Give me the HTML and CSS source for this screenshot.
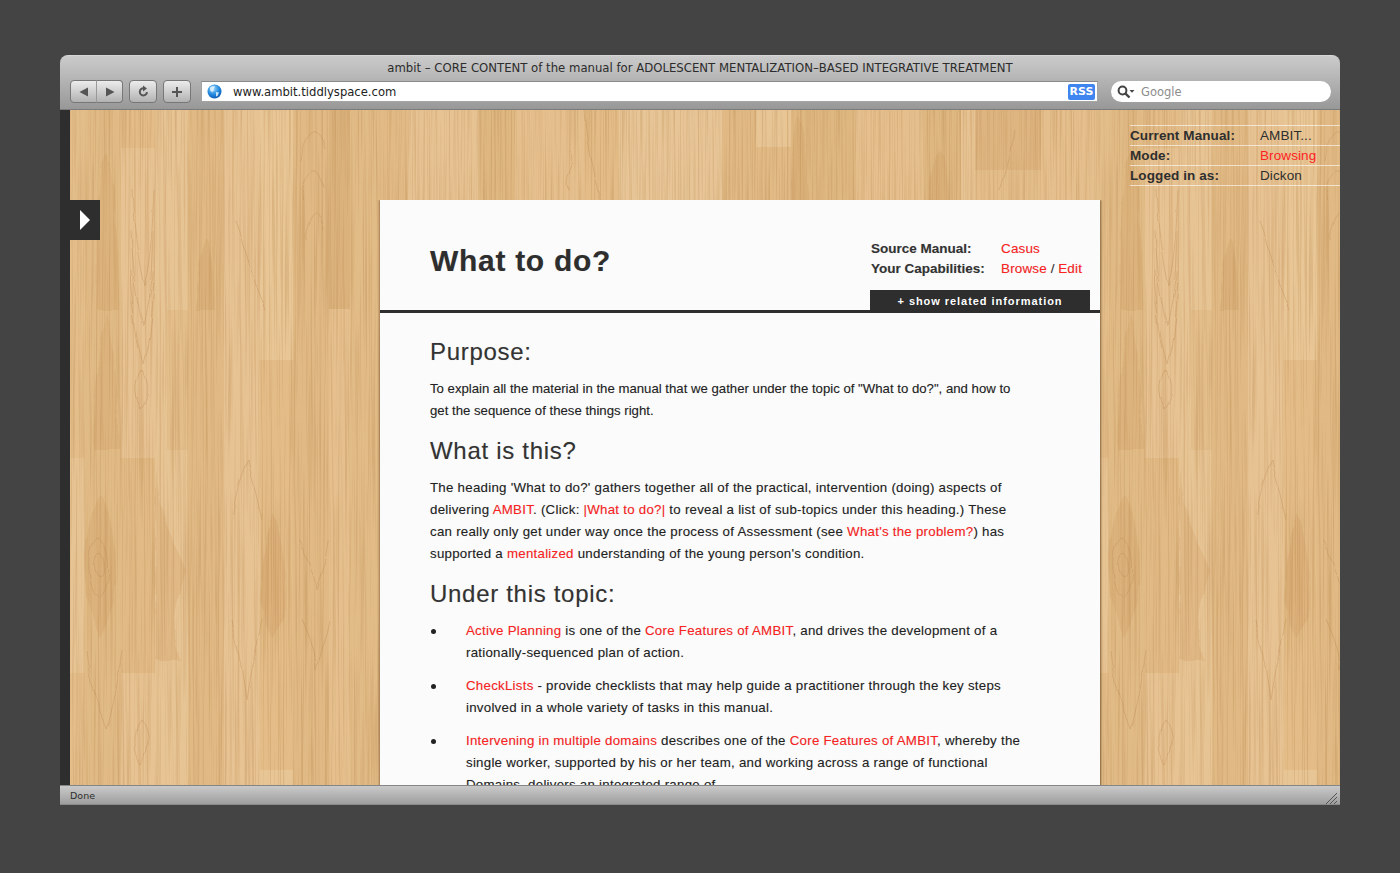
FILE: index.html
```html
<!DOCTYPE html>
<html lang="en">
<head>
    <meta charset="UTF-8">
    <title>ambit - CORE CONTENT of the manual for ADOLESCENT MENTALIZATION-BASED INTEGRATIVE TREATMENT</title>
    <link rel="stylesheet" href="styles.css">
</head>
<body>
    <div class="window">
        <div class="chrome">
            <div class="window-title">ambit &#8211; CORE CONTENT of the manual for ADOLESCENT MENTALIZATION&#8211;BASED INTEGRATIVE TREATMENT</div>
            <div class="toolbar">
                <div class="btn-group">
                    <button class="tool-btn nav-btn"><svg width="12" height="12" viewBox="0 0 12 12"><path d="M10 1.500v9L1.500 6z" fill="#555"/></svg></button>
                    <button class="tool-btn nav-btn"><svg width="12" height="12" viewBox="0 0 12 12"><path d="M2 1.500v9L10.500 6z" fill="#555"/></svg></button>
                </div>
                <button class="tool-btn single-btn"><svg width="13" height="13" viewBox="0 0 13 13"><path d="M10 7.200A3.600 3.600 0 1 1 6.400 3.300" fill="none" stroke="#555" stroke-width="2"/><path d="M6 .4l4 3-4 3z" fill="#555"/></svg></button>
                <button class="tool-btn single-btn"><svg width="12" height="12" viewBox="0 0 12 12"><path d="M6 1v10M1 6h10" stroke="#555" stroke-width="2"/></svg></button>
                <div class="address-bar">
                    <svg class="globe" width="15" height="15" viewBox="0 0 15 15">
                        <defs><radialGradient id="globeFill" cx=".4" cy=".3" r=".8"><stop offset="0" stop-color="#9fdcff"/><stop offset=".55" stop-color="#1f86dc"/><stop offset="1" stop-color="#0b4fa8"/></radialGradient></defs>
                        <circle cx="7.500" cy="7.500" r="7" fill="url(#globeFill)"/>
                        <path d="M3 3.500c2-1.500 4-1.500 5-.8L6.500 5 7 6.500 5 8 3.200 6.500zM9 8l3 .5-1.500 3.500-1.500.5z" fill="#e8f4fb" opacity=".85"/>
                    </svg>
                    <span class="url">www.ambit.tiddlyspace.com</span>
                    <span class="rss">RSS</span>
                </div>
                <div class="search-box">
                    <svg width="18" height="14" viewBox="0 0 18 14"><circle cx="5.500" cy="5.500" r="3.900" fill="none" stroke="#444" stroke-width="2"/><path d="M8.300 8.300L12.500 12.500" stroke="#444" stroke-width="2.400"/><path d="M12.500 5h5l-2.500 2.800z" fill="#444"/></svg>
                    <span>Google</span>
                </div>
            </div>
        </div>

        <div class="viewport">
            <svg class="wood" width="1270" height="675" viewBox="70 110 1270 675" aria-hidden="true">
                <defs>
                    <filter id="grain" x="0" y="0" width="100%" height="100%" color-interpolation-filters="sRGB">
                        <feTurbulence type="fractalNoise" baseFrequency="0.55 0.006" numOctaves="3" seed="7"/>
                        <feColorMatrix type="matrix" values="0 0 0 0 .68  0 0 0 0 .47  0 0 0 0 .24  3 0 0 0 -1.300"/>
                    </filter>
                    <filter id="wobble" x="-5%" y="-5%" width="110%" height="110%" color-interpolation-filters="sRGB">
                        <feTurbulence type="fractalNoise" baseFrequency="0.05 0.035" numOctaves="2" seed="3" result="n"/>
                        <feDisplacementMap in="SourceGraphic" in2="n" scale="6" xChannelSelector="R" yChannelSelector="G"/>
                        <feGaussianBlur stdDeviation=".5"/>
                    </filter>
                    <g id="tile">
                        <!-- left planks -->
                        <rect x="70" y="110" width="15" height="675" fill="#e3bd88"/>
                        <rect x="70" y="458" width="15" height="215" fill="#e9c697"/>
                        <rect x="85" y="110" width="36" height="675" fill="#e0b983"/>
                        <rect x="121" y="110" width="34" height="675" fill="#e8c596"/>
                        <rect x="121" y="110" width="34" height="38" fill="#e2bb86"/>
                        <rect x="121" y="458" width="34" height="215" fill="#e0b882"/>
                        <rect x="155" y="110" width="33" height="675" fill="#e8c697"/>
                        <rect x="188" y="110" width="36" height="675" fill="#dfb680"/>
                        <rect x="167" y="310" width="21" height="140" fill="#e3be8a"/>
                        <rect x="224" y="110" width="36" height="675" fill="#e8c596"/>
                        <rect x="260" y="110" width="33" height="250" fill="#eac999"/>
                        <rect x="260" y="360" width="33" height="410" fill="#e2bb85"/>
                        <rect x="260" y="770" width="33" height="15" fill="#e9c798"/>
                        <rect x="293" y="110" width="36" height="675" fill="#dfb680"/>
                        <rect x="329" y="110" width="21" height="199" fill="#d7ac74"/>
                        <rect x="329" y="309" width="21" height="476" fill="#e6c18e"/>
                        <rect x="350" y="110" width="30" height="675" fill="#e1ba84"/>
                        <!-- above the page -->
                        <rect x="380" y="110" width="28" height="675" fill="#e0b882"/>
                        <rect x="408" y="110" width="71" height="675" fill="#e8c596"/>
                        <rect x="479" y="110" width="36" height="675" fill="#dcb37c"/>
                        <rect x="515" y="110" width="69" height="675" fill="#e6c18f"/>
                        <rect x="584" y="110" width="35" height="675" fill="#e2bb85"/>
                        <rect x="619" y="110" width="103" height="675" fill="#e9c89a"/>
                        <rect x="722" y="110" width="34" height="675" fill="#dfb680"/>
                        <rect x="756" y="110" width="35" height="37" fill="#e9c798"/>
                        <rect x="756" y="147" width="35" height="638" fill="#e0b882"/>
                        <rect x="791" y="110" width="64" height="675" fill="#dcb37c"/>
                        <rect x="855" y="110" width="69" height="675" fill="#e6c18f"/>
                        <rect x="924" y="110" width="37" height="675" fill="#dcb37c"/>
                        <rect x="961" y="110" width="14" height="675" fill="#e8c596"/>
                        <rect x="975" y="110" width="66" height="60" fill="#dbb17a"/>
                        <rect x="975" y="170" width="66" height="615" fill="#e3be8a"/>
                        <rect x="1041" y="110" width="53" height="675" fill="#e6c18f"/>
                        <rect x="70" y="110" width="1024" height="675" fill="#e4c08d" opacity=".3"/>
                        <!-- figure in the grain -->
                        <g filter="url(#wobble)">
                            <g fill="#cf9f66" opacity=".28">
                                <path d="M106 153c-8 10-11 80-9 157h22c-1-70-4-140-13-157z"/>
                                <path d="M106 312c-7 30-12 90-13 138h26c-1-50-6-110-13-138z"/>
                                <path d="M206 238c-6 10-9 40-10 72h19c-1-30-3-60-9-72z"/>
                                <path d="M100 495c-9 10-14 40-16 72 2 30 9 60 17 70 8-15 15-45 15-70 0-30-6-60-16-72z"/>
                                <path d="M273 513c-8 25-12 60-13 87 4 20 9 30 13 38 7-12 14-25 14-38 0-30-6-65-14-87z"/>
                                <path d="M155 470l1 190h24c-10-30-6-50 6-90-14-30-26-60-31-100z"/>
                                <path d="M940 150c-8 10-10 30-11 50h20c-1-20-3-40-9-50z"/>
                                <path d="M797 115c-5 15-4 60-5 85h17c-1-30-3-70-12-85z"/>
                            </g>
                            <g fill="none" stroke="#bf8f5a" stroke-width="1" opacity=".4">
                                <path d="M97 537c-10 10-10 50 3 60 12-10 12-50-3-60z"/>
                                <path d="M100 555c-6 4-6 16 0 22 6-4 8-16 0-22z"/>
                                <path d="M86 650c4 40 14 60 20 78 8-20 12-50 16-78"/>
                                <path d="M132 190c2 40 6 70 12 95 8-30 8-60 10-95"/>
                                <path d="M130 230c2 40 6 70 13 95 8-30 9-60 10-95"/>
                                <path d="M130 270c2 40 6 70 13 95 8-30 9-60 10-95"/>
                                <path d="M141 370c-6 8-8 25 0 38 8-10 10-28 0-38z"/>
                                <path d="M141 720c-7 8-9 30 0 44 8-10 11-32 0-44z"/>
                                <path d="M300 160c4-30 18-40 25-10M302 200c4-30 16-40 22-10M304 240c4-30 14-40 20-10"/>
                                <path d="M236 220c10 30 16 60 30 90"/>
                                <path d="M232 520c4-30 10-50 16-60 4 20 10 40 14 60M232 620c6 30 10 50 14 80 4-30 10-50 16-80"/>
                                <path d="M300 540c8 20 14 30 16 50 6-20 10-30 12-50M302 620c8 20 14 30 14 50 6-20 10-30 14-50"/>
                                <path d="M570 150c10 12-10 30 0 40M600 200c-8-30-14-60-16-90"/>
                                <path d="M1000 190c6-20 10-30 14-60"/>
                            </g>
                        </g>
                        <rect x="70" y="110" width="1024" height="675" filter="url(#grain)" opacity=".25"/>
                    </g>
                </defs>
                <use href="#tile"/>
                <use href="#tile" x="1024"/>
            </svg>

            <div class="sidebar-col">
                <div class="sidebar-toggle"></div>
            </div>

            <div class="page">
                <div class="page-header">
                    <h1>What to do?</h1>
                    <div class="page-meta">
                        <div class="meta-rows">
                            <span class="meta-label">Source Manual:</span><span><a href="#">Casus</a></span>
                            <span class="meta-label">Your Capabilities:</span><span><a href="#">Browse</a> / <a href="#">Edit</a></span>
                        </div>
                        <div class="related-btn">+ show related information</div>
                    </div>
                </div>
                <div class="page-body">
                    <h2>Purpose:</h2>
                    <p class="purpose">To explain all the material in the manual that we gather under the topic of "What to do?", and how to get the sequence of these things right.</p>
                    <h2>What is this?</h2>
                    <p>The heading 'What to do?' gathers together all of the practical, intervention (doing) aspects of delivering <a href="#">AMBIT</a>. (Click: <a href="#">|What to do?|</a> to reveal a list of sub-topics under this heading.) These can really only get under way once the process of Assessment (see <a href="#">What's the problem?</a>) has supported a <a href="#">mentalized</a> understanding of the young person's condition.</p>
                    <h2>Under this topic:</h2>
                    <ul>
                        <li><a href="#">Active Planning</a> is one of the <a href="#">Core Features of AMBIT</a>, and drives the development of a rationally-sequenced plan of action.</li>
                        <li><a href="#">CheckLists</a> - provide checklists that may help guide a practitioner through the key steps involved in a whole variety of tasks in this manual.</li>
                        <li><a href="#">Intervening in multiple domains</a> describes one of the <a href="#">Core Features of AMBIT</a>, whereby the single worker, supported by his or her team, and working across a range of functional Domains, delivers an integrated range of...</li>
                    </ul>
                </div>
            </div>

            <div class="info-panel">
                <div class="info-row"><span class="info-label">Current Manual:</span><span>AMBIT...</span></div>
                <div class="info-row"><span class="info-label">Mode:</span><span class="info-red">Browsing</span></div>
                <div class="info-row"><span class="info-label">Logged in as:</span><span>Dickon</span></div>
            </div>
        </div>

        <div class="status-bar">
            <span>Done</span>
            <svg class="grip" width="11" height="11" viewBox="0 0 11 11"><path d="M0 11L11 0M4 11l7-7M8 11l3-3" stroke="#555" stroke-width="1"/></svg>
        </div>
    </div>
</body>
</html>
```
FILE: styles.css
```css
body {
    margin: 0;
    height: 873px;
    overflow: hidden;
    box-sizing: border-box;
    padding: 55px 60px 68px;
    background-color: #444444;
    font-family: "Liberation Sans", Arial, sans-serif;
}
.window {
    display: flex;
    flex-direction: column;
    height: 750px;
}

/* browser chrome */
.chrome {
    height: 55px;
    box-sizing: border-box;
    background: linear-gradient(#cbcbcb, #989898);
    border-radius: 8px 8px 0 0;
    border-top: 1px solid #d8d8d8;
    border-bottom: 1px solid #7b7b7b;
}
.window-title {
    height: 24px;
    line-height: 25px;
    text-align: center;
    font-family: "DejaVu Sans", sans-serif;
    font-size: 11.7px;
    color: #2c2c2c;
}
.toolbar {
    display: flex;
    align-items: center;
    height: 23px;
    padding-left: 10px;
}
.btn-group {
    display: flex;
    margin-right: 6px;
}
.tool-btn {
    display: flex;
    align-items: center;
    justify-content: center;
    height: 23px;
    padding: 0;
    border: 1px solid #777;
    background: linear-gradient(#ececec, #b2b2b2);
    box-sizing: border-box;
}
.nav-btn {
    width: 27px;
    border-radius: 4px 0 0 4px;
}
.nav-btn + .nav-btn {
    width: 27px;
    border-left: 1px solid #999;
    border-radius: 0 4px 4px 0;
    margin-left: -1px;
}
.single-btn {
    width: 28px;
    border-radius: 4px;
    margin-right: 6px;
}
.single-btn + .address-bar {
    margin-left: 4px;
}
.address-bar {
    display: flex;
    align-items: center;
    width: 897px;
    height: 21px;
    margin-right: 13px;
    box-sizing: border-box;
    padding: 0 2px 0 5px;
    background: #fff;
    border: 1px solid #a4a4a4;
    border-top-color: #8a8a8a;
}
.url {
    margin-left: 11px;
    flex: 1;
    font-family: "DejaVu Sans", sans-serif;
    font-size: 11.6px;
    color: #222;
}
.rss {
    width: 27px;
    height: 16px;
    line-height: 16px;
    text-align: center;
    font-family: "DejaVu Sans", sans-serif;
    font-size: 11px;
    font-weight: bold;
    color: #fff;
    background: #3f85f0;
    border-radius: 2px;
}
.search-box {
    display: flex;
    align-items: center;
    gap: 6px;
    width: 220px;
    height: 21px;
    box-sizing: border-box;
    padding-left: 6px;
    background: #fff;
    border-radius: 11px;
    font-family: "DejaVu Sans", sans-serif;
    font-size: 11.5px;
    color: #8c8c8c;
}

/* page area */
.viewport {
    position: relative;
    flex: 1;
    min-height: 0;
    overflow: hidden;
    display: grid;
    grid-template-columns: 320px 720px 1fr;
    align-items: start;
    background-color: #2e2e2e;
}
.wood {
    position: absolute;
    top: 0;
    left: 10px;
}
.sidebar-col {
    position: relative;
    padding: 90px 0 0 10px;
}
.sidebar-toggle {
    display: flex;
    align-items: center;
    justify-content: center;
    width: 30px;
    height: 40px;
    background-color: #2e2e2e;
}
.sidebar-toggle::before {
    content: "";
    border-left: 10px solid #fff;
    border-top: 10px solid transparent;
    border-bottom: 10px solid transparent;
}
.page {
    position: relative;
    margin-top: 90px;
    background-color: #fbfbfb;
    box-shadow: 1px 0 2px rgba(70, 40, 10, 0.6), -1px 0 2px rgba(70, 40, 10, 0.4);
    clip-path: inset(0 -4px -4px -4px);
    color: #222;
    text-shadow: 0 0 1px rgba(0, 0, 0, 0.2);
}
.page a {
    color: #ff2222;
    text-decoration: none;
}
.page-header {
    display: flex;
    justify-content: space-between;
    height: 110px;
    padding-left: 50px;
    border-bottom: 3px solid #2e2e2e;
}
.page-header h1 {
    margin: 42px 0 0;
    font-size: 30px;
    line-height: 38px;
    letter-spacing: 0.7px;
    color: #2e2e2e;
}
.page-meta {
    width: 220px;
    margin-right: 10px;
    padding-top: 39px;
    font-size: 13.5px;
    color: #333;
}
.page-meta a {
    letter-spacing: 0.15px;
}
.meta-rows {
    display: grid;
    grid-template-columns: 130px 1fr;
    grid-auto-rows: 20px;
    line-height: 20px;
    height: 51px;
    padding-left: 1px;
}
.meta-label {
    font-weight: bold;
}
.related-btn {
    height: 23px;
    line-height: 23px;
    text-align: center;
    background-color: #2e2e2e;
    color: #fff;
    font-size: 11px;
    font-weight: bold;
    letter-spacing: 0.95px;
}
.page-body {
    padding: 23px 70px 0 50px;
    font-size: 13.3px;
    line-height: 22px;
    letter-spacing: 0.25px;
}
.page-body h2 {
    margin: 0 0 10px;
    font-size: 24px;
    font-weight: normal;
    line-height: 32px;
    letter-spacing: 0.7px;
    color: #333;
}
.page-body p {
    margin: 0 0 13px;
}
.page-body .purpose {
    font-size: 13.2px;
    letter-spacing: 0;
}
.page-body ul {
    margin: 0;
    padding: 0;
    list-style: none;
}
.page-body li {
    position: relative;
    margin-bottom: 11px;
    padding-left: 36px;
}
.page-body li::before {
    content: "";
    position: absolute;
    left: 1px;
    top: 9px;
    width: 5px;
    height: 5px;
    border-radius: 50%;
    background-color: #222;
}
.info-panel {
    position: relative;
    margin: 15px 0 0 30px;
    border-top: 1px solid rgba(255, 255, 255, 0.6);
    font-size: 13.5px;
    letter-spacing: 0.1px;
    color: #2e2e2e;
}
.info-row {
    display: grid;
    grid-template-columns: 130px 1fr;
    height: 19px;
    line-height: 19px;
    border-bottom: 1px solid rgba(255, 255, 255, 0.6);
}
.info-label {
    font-weight: bold;
}
.info-red {
    color: #ff2222;
}

/* status bar */
.status-bar {
    display: flex;
    align-items: center;
    justify-content: space-between;
    height: 20px;
    box-sizing: border-box;
    padding: 0 3px 0 10px;
    background: linear-gradient(#cacaca, #9e9e9e);
    border-top: 1px solid #858585;
    border-bottom: 1px solid #8a8a8a;
    font-family: "DejaVu Sans", sans-serif;
    font-size: 9.5px;
    color: #2c2c2c;
}
.grip {
    align-self: flex-end;
}
```
